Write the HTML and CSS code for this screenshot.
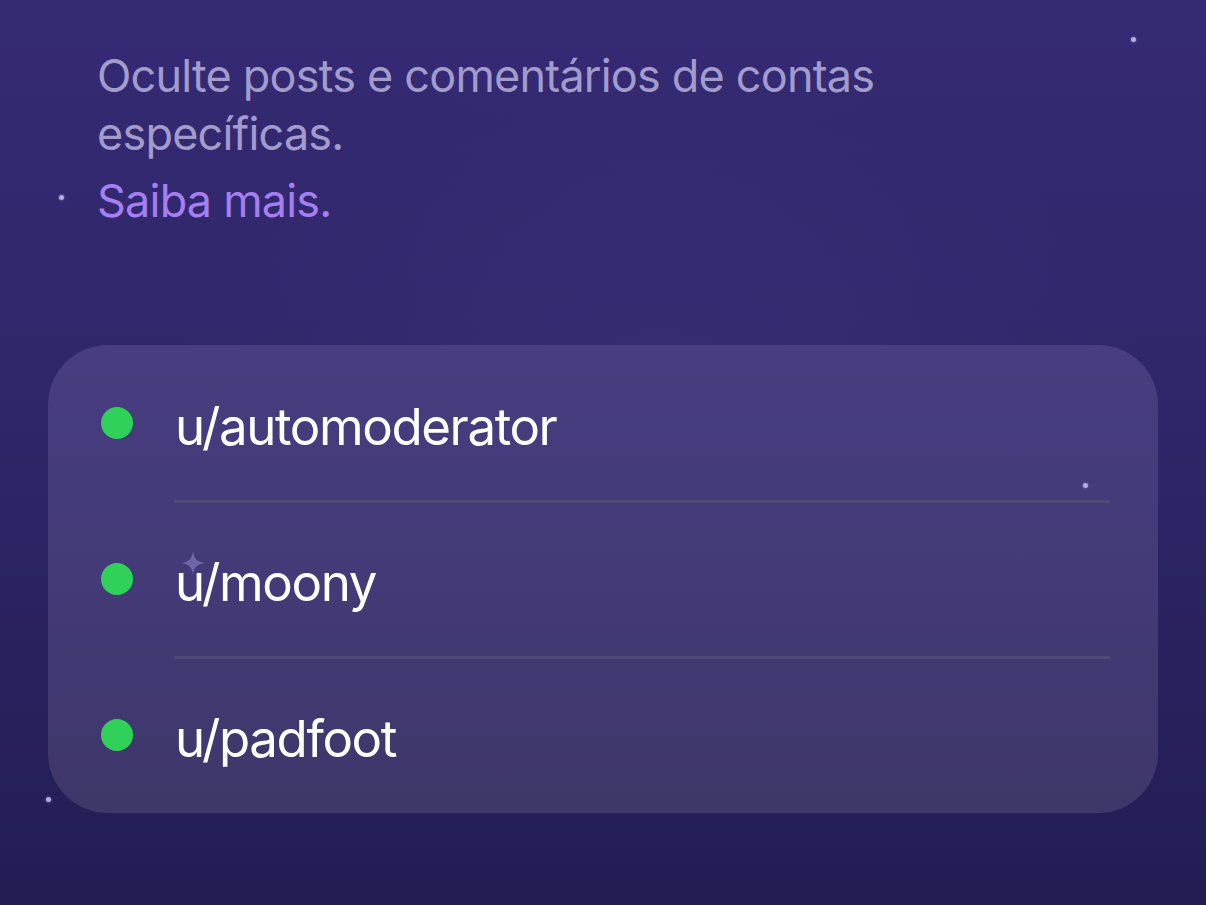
FILE: index.html
```html
<!DOCTYPE html>
<html lang="pt-BR">
<head>
    <meta charset="UTF-8">
    <title>Contas bloqueadas</title>
    <link rel="stylesheet" href="styles.css">
</head>
<body>
    <div class="screen">
        <span class="star" style="left:1131px; top:37px"></span>
        <span class="star" style="left:59px; top:195px"></span>
        <span class="star" style="left:1083px; top:483px"></span>
        <span class="star" style="left:46px; top:797px"></span>
        <svg class="sparkle" width="24" height="24" viewBox="0 0 24 24">
            <path d="M12 0 C13 8 16 11 24 12 C16 13 13 16 12 24 C11 16 8 13 0 12 C8 11 11 8 12 0 Z"/>
        </svg>

        <div class="intro">
            <p class="intro-text">Oculte posts e comentários de contas específicas.</p>
            <a class="intro-link" href="#">Saiba mais.</a>
        </div>

        <ul class="account-list">
            <li class="account-item">
                <span class="status-dot"></span>
                <span class="account-name">u/automoderator</span>
            </li>
            <li class="account-item">
                <span class="status-dot"></span>
                <span class="account-name">u/moony</span>
            </li>
            <li class="account-item">
                <span class="status-dot"></span>
                <span class="account-name">u/padfoot</span>
            </li>
        </ul>
    </div>
</body>
</html>
```

FILE: styles.css
```css
html, body {
    margin: 0;
    padding: 0;
}

body {
    width: 1206px;
    height: 905px;
    overflow: hidden;
    font-family: Inter, "Noto Sans", sans-serif;
    background: #2c2463;
}

.screen {
    position: relative;
    height: 905px;
    padding: 47px 48px 0;
    box-sizing: border-box;
    background:
        radial-gradient(ellipse 700px 500px at 55% 45%, rgba(80, 70, 150, 0.18), rgba(80, 70, 150, 0) 70%),
        linear-gradient(180deg, #352a74 0%, #30276b 40%, #28215d 75%, #231d54 100%);
}

/* little stars on the background */
.star {
    position: absolute;
    width: 5px;
    height: 5px;
    border-radius: 50%;
    background: #b3acdf;
    box-shadow: 0 0 3px rgba(180, 170, 230, 0.6);
}

.sparkle {
    position: absolute;
    left: 181px;
    top: 551px;
    fill: rgba(150, 140, 210, 0.55);
    z-index: 2;
}

.intro {
    padding: 0 49px;
}

.intro-text {
    margin: 0;
    max-width: 900px;
    font-size: 45px;
    line-height: 58px;
    letter-spacing: -0.8px;
    color: #a29ccc;
}

.intro-link {
    display: block;
    margin-top: 9px;
    font-size: 45px;
    line-height: 58px;
    letter-spacing: -0.8px;
    color: #a57ff0;
    text-decoration: none;
}

.account-list {
    list-style: none;
    margin: 115px 0 0;
    padding: 0;
    border-radius: 60px;
    background: linear-gradient(180deg, #473d80 0%, #433a77 50%, #3e3769 100%);
    overflow: hidden;
}

.account-item {
    display: flex;
    align-items: center;
    height: 156px;
    padding: 0 48px 0 53px;
    position: relative;
}

.account-item + .account-item::before {
    content: "";
    position: absolute;
    left: 126px;
    right: 48px;
    top: -1px;
    height: 3px;
    background: #504877;
}

.status-dot {
    width: 32px;
    height: 32px;
    border-radius: 50%;
    background: #30d158;
    flex-shrink: 0;
}

.account-name {
    margin-left: 42px;
    font-size: 51px;
    letter-spacing: -1.4px;
    color: #ffffff;
    position: relative;
    top: 3px;
}
```
